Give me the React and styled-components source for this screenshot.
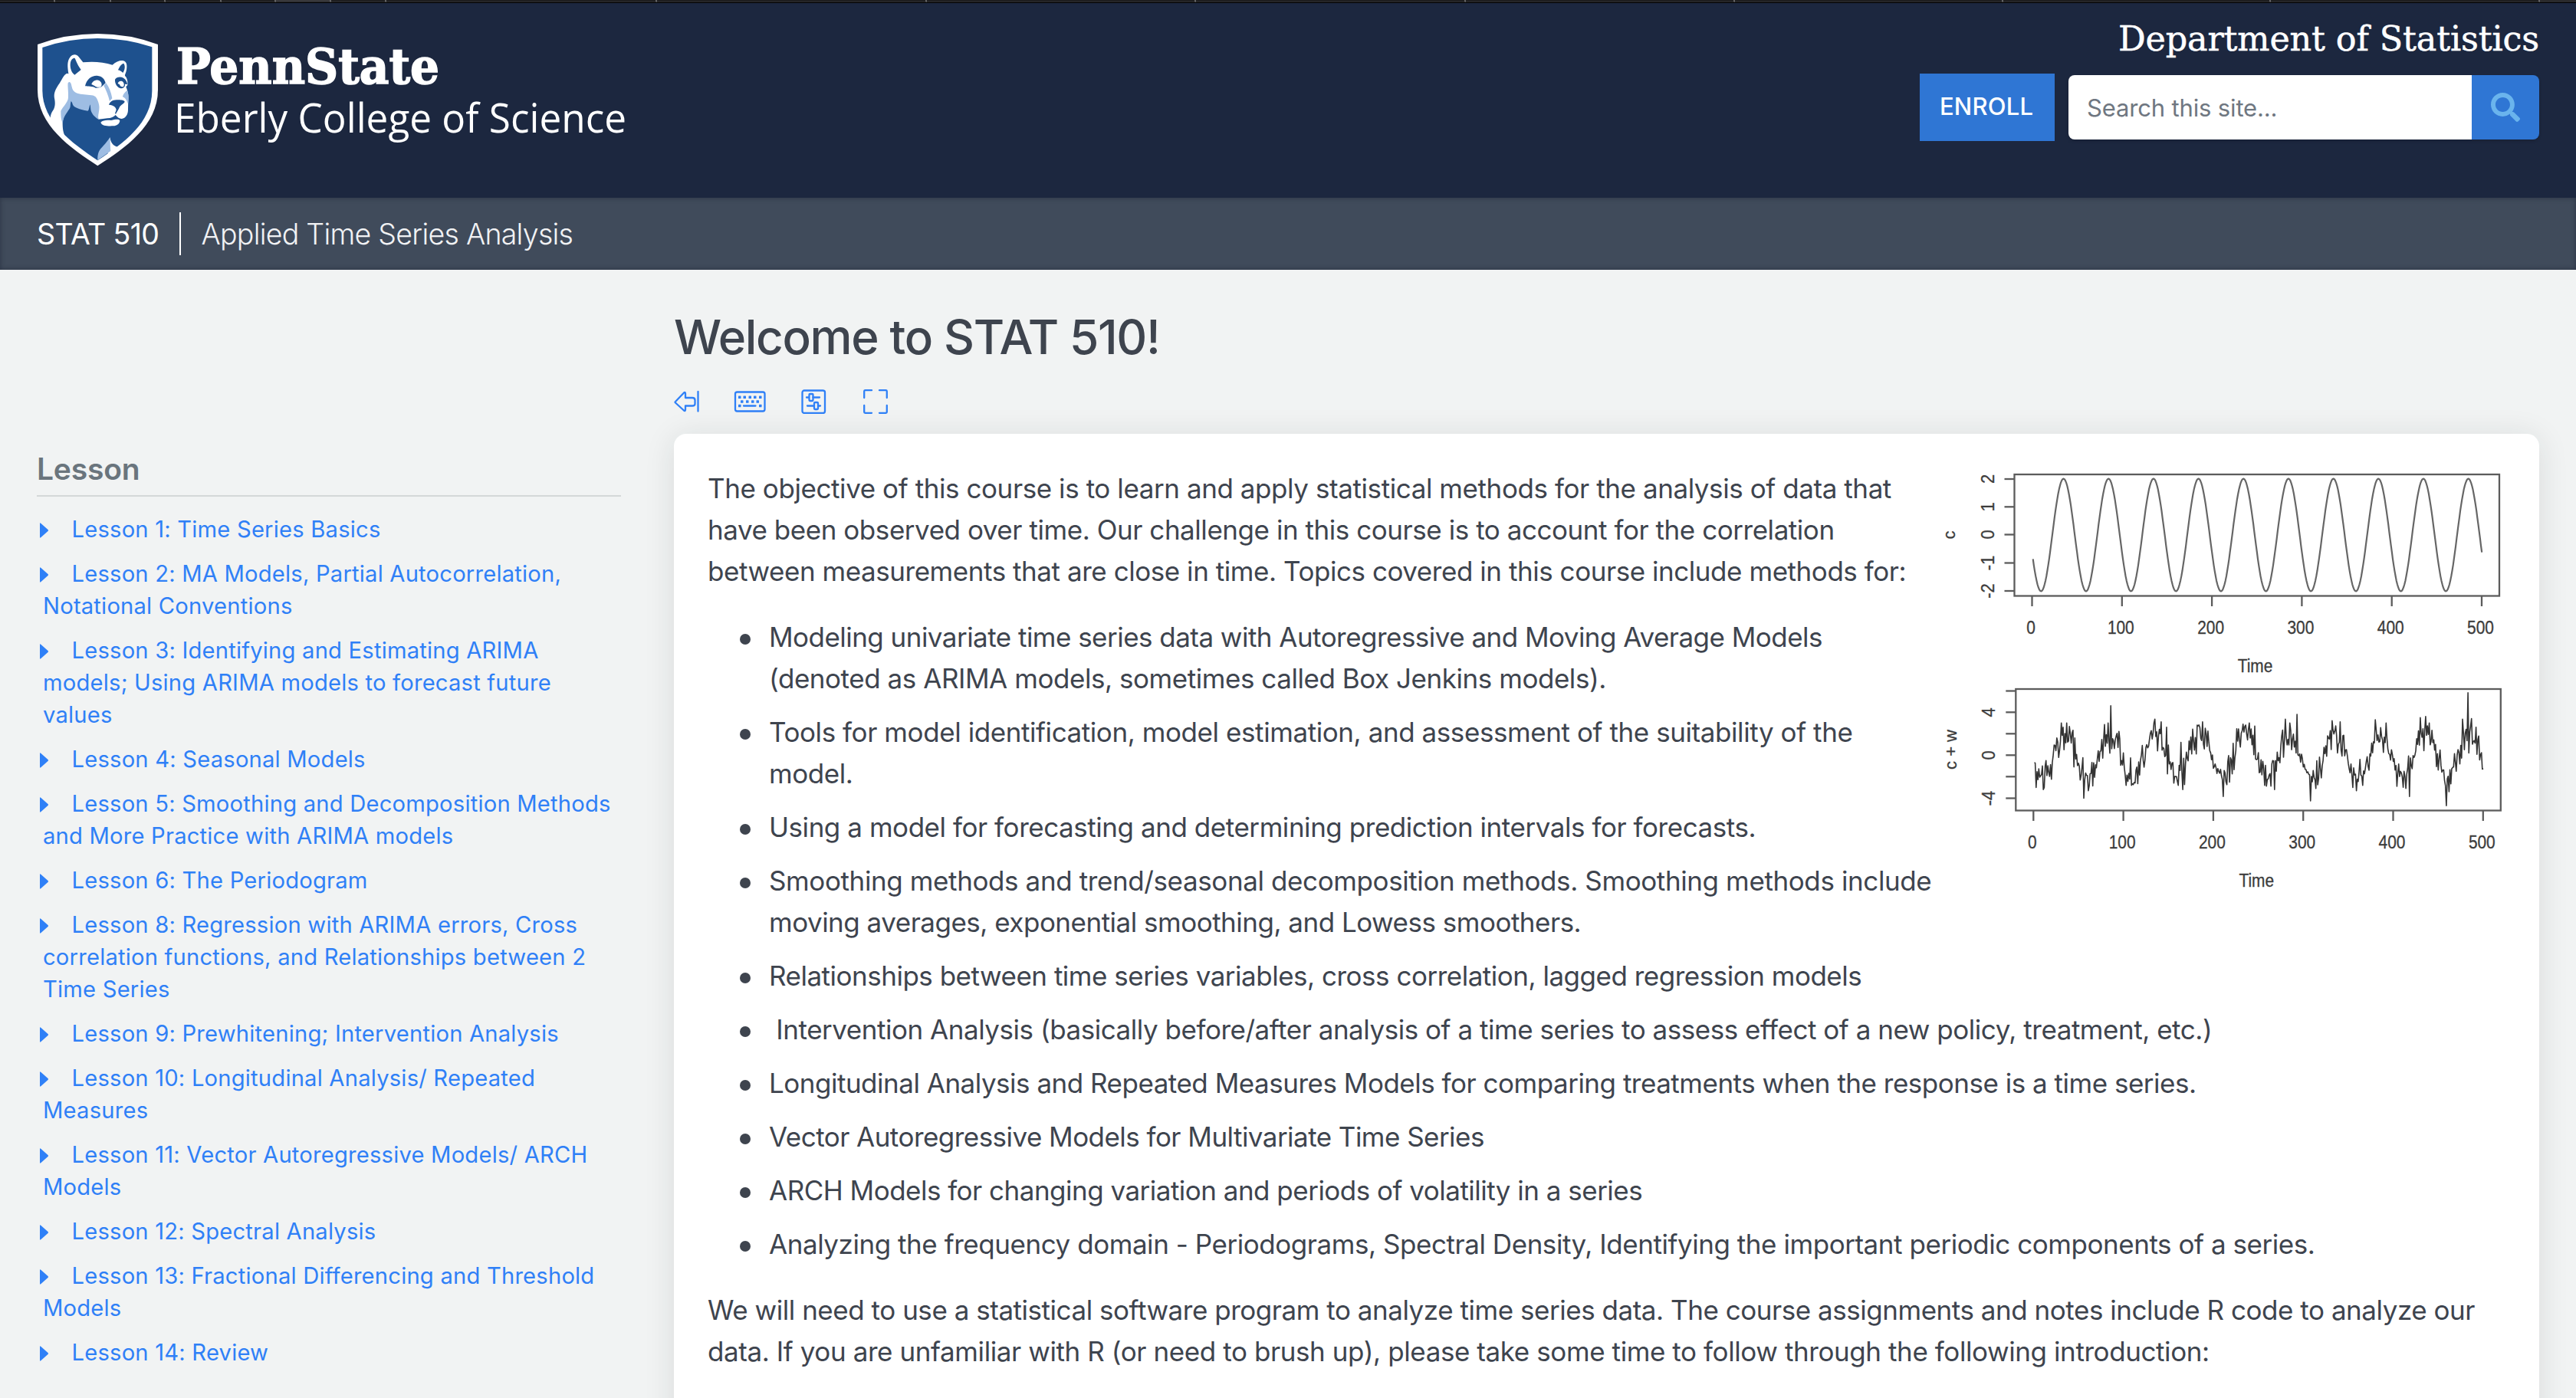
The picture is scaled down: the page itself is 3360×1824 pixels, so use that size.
import React from "react";
import styled, { createGlobalStyle } from "styled-components";
import { FaSearch } from "react-icons/fa";

const sans = `Inter, "Open Sans", "Liberation Sans", sans-serif`;
const slab = `"DejaVu Serif", "Liberation Serif", serif`;

const GlobalStyle = createGlobalStyle`
  * { box-sizing: border-box; }
  html, body { margin: 0; padding: 0; background: #f1f3f3; }
  body { font-family: ${sans}; color: #3e444e; }
`;

const Page = styled.div`
  display: flex;
  flex-direction: column;
  height: 1824px;
  overflow: hidden;
`;

/* ---- browser tab edge ---- */
const TabStrip = styled.div`
  display: flex;
  flex: none;
  height: 4px;
  background: #1e1e20;
  border-bottom: 1px solid #000;
`;
const Tab = styled.div`
  width: ${(p) => p.$w}px;
  background: ${(p) => (p.$active ? "#38383b" : "#1e1e20")};
  border-right: 2px solid #626264;
  border-bottom: 1px solid #2c2c2e;
`;
const TabRest = styled.div`
  flex: 1;
  background: #2a2a2c;
`;

/* ---- header ---- */
const Header = styled.header`
  display: flex;
  flex: none;
  justify-content: space-between;
  height: 254px;
  padding: 0 48px;
  background: #1c273f;
`;
const Logo = styled.svg`
  display: block;
  width: 800px;
  height: 254px;
`;
const HeaderSide = styled.div`
  display: flex;
  flex-direction: column;
  align-items: flex-end;
  padding-top: 23px;
`;
const Department = styled.div`
  font: 400 44.5px/48px ${slab};
  letter-spacing: -0.15px;
  color: #fff;
  white-space: nowrap;
  -webkit-text-stroke: 0.5px #fff;
`;
const Actions = styled.div`
  display: flex;
  align-items: center;
  gap: 18px;
  margin-top: 21px;
`;
const Enroll = styled.a`
  display: flex;
  align-items: center;
  justify-content: center;
  width: 176px;
  height: 88px;
  padding: 0 2px 3px 0;
  background: #2f76d4;
  color: #fff;
  font-size: 31px;
  font-weight: 500;
  letter-spacing: 0.2px;
`;
const SearchForm = styled.div`
  display: flex;
  width: 614px;
  height: 84px;
  border-radius: 8px;
  overflow: hidden;
  box-shadow: 0 2px 4px rgba(0, 0, 0, 0.15);
`;
const SearchField = styled.div`
  display: flex;
  flex: 1;
  align-items: center;
  padding-left: 24px;
  background: #fff;
  color: #6f7781;
  font-size: 31px;
  letter-spacing: -0.15px;
`;
const SearchButton = styled.div`
  display: flex;
  align-items: center;
  justify-content: center;
  width: 88px;
  background: #2f76d4;
  color: #6ab4ed;
`;

/* ---- course bar ---- */
const CourseBar = styled.div`
  display: flex;
  flex: none;
  align-items: center;
  height: 94px;
  padding: 0 48px;
  background: #404b5b;
  box-shadow: inset 0 0 6px rgba(20, 28, 44, 0.5);
  color: #fff;
  font-size: 37.5px;
  white-space: nowrap;
`;
const CourseCode = styled.span`
  padding-right: 27px;
  letter-spacing: -0.6px;
`;
const Divider = styled.span`
  width: 2px;
  height: 56px;
  background: #fff;
`;
const CourseName = styled.span`
  padding-left: 26px;
  font-weight: 300;
  letter-spacing: -0.73px;
  color: #f1f2f4;
`;

/* ---- body ---- */
const Body = styled.div`
  display: grid;
  grid-template-columns: 762px 1fr;
  column-gap: 69px;
  flex: 1;
  padding: 0 48px;
`;
const Sidebar = styled.nav`
  padding-top: 230px;
`;
const SidebarTitle = styled.h2`
  margin: 0;
  height: 66px;
  border-bottom: 2px solid #d4d8d8;
  color: #6a757d;
  font-size: 39px;
  font-weight: 600;
  line-height: 60px;
  letter-spacing: -0.2px;
`;
const LessonList = styled.ul`
  display: flex;
  flex-direction: column;
  gap: 16px;
  margin: 0;
  padding: 22px 0 0;
  list-style: none;
`;
const Lesson = styled.li`
  padding-left: 8px;
  color: #2f80f7;
  font-size: 29.2px;
  line-height: 42px;
  letter-spacing: 0.2px;
  white-space: nowrap;
`;
const Caret = styled.svg`
  width: 12px;
  height: 20px;
  margin: 0 29.5px 0 -4px;
  vertical-align: -1px;
  fill: currentColor;
`;
const Main = styled.main`
  display: flex;
  flex-direction: column;
`;
const Title = styled.h1`
  margin: 48px 0 0;
  font-size: 62px;
  font-weight: 500;
  line-height: 80px;
  letter-spacing: -1.35px;
`;
const Tools = styled.div`
  display: flex;
  align-items: center;
  height: 32px;
  margin-top: 28px;
  color: #2f80f7;
`;
const ToolIcon = styled.svg`
  width: ${(p) => p.$w}px;
  height: 32px;
  margin-right: ${(p) => p.$gap || 0}px;
  fill: none;
  stroke: currentColor;
  stroke-width: 2.3;
  stroke-linejoin: round;
  stroke-linecap: round;
`;
const Card = styled.article`
  flex: none;
  height: 1400px;
  margin-top: 26px;
  padding: 44px;
  background: #fff;
  border-radius: 16px;
  box-shadow: 0 4px 40px rgba(30, 40, 40, 0.11);
  font-size: 35px;
  line-height: 54px;
  letter-spacing: -0.45px;
  white-space: nowrap;
`;
const Figure = styled.svg`
  float: right;
  display: block;
  width: 738px;
  height: 570px;
`;
const Line = styled.span`
  letter-spacing: ${(p) => p.$track}px;
`;
const Paragraph = styled.p`
  margin: 0;
`;
const Topics = styled.ul`
  margin: 32px 0;
  padding: 0 0 0 80px;
  list-style: none;
`;
const Topic = styled.li`
  & + & { margin-top: 16px; }
  &::before {
    content: "";
    display: inline-block;
    width: 14px;
    height: 14px;
    margin: 0 24px 0 -38px;
    border-radius: 50%;
    background: #3e444e;
    vertical-align: 3px;
  }
`;

const tabWidths = [72, 73, 71, 73, 71, 72, 72, 353, 352, 351, 352, 351, 350, 349, 351];

const lessons = [
  ["Lesson 1: Time Series Basics"],
  ["Lesson 2: MA Models, Partial Autocorrelation,", "Notational Conventions"],
  ["Lesson 3: Identifying and Estimating ARIMA", "models; Using ARIMA models to forecast future", "values"],
  ["Lesson 4: Seasonal Models"],
  ["Lesson 5: Smoothing and Decomposition Methods", "and More Practice with ARIMA models"],
  ["Lesson 6: The Periodogram"],
  ["Lesson 8: Regression with ARIMA errors, Cross", "correlation functions, and Relationships between 2", "Time Series"],
  ["Lesson 9: Prewhitening; Intervention Analysis"],
  ["Lesson 10: Longitudinal Analysis/ Repeated", "Measures"],
  ["Lesson 11: Vector Autoregressive Models/ ARCH", "Models"],
  ["Lesson 12: Spectral Analysis"],
  ["Lesson 13: Fractional Differencing and Threshold", "Models"],
  ["Lesson 14: Review"],
];

/* A line is its text, or its text with its own tracking. */
const topics = [
  [["Modeling univariate time series data with Autoregressive and Moving Average Models", -0.53], "(denoted as ARIMA models, sometimes called Box Jenkins models)."],
  [["Tools for model identification, model estimation, and assessment of the suitability of the", -0.42], "model."],
  ["Using a model for forecasting and determining prediction intervals for forecasts."],
  [["Smoothing methods and trend/seasonal decomposition methods. Smoothing methods include", -0.39], ["moving averages, exponential smoothing, and Lowess smoothers.", -0.5]],
  [["Relationships between time series variables, cross correlation, lagged regression models", -0.49]],
  [["\u00a0Intervention Analysis (basically before/after analysis of a time series to assess effect of a new policy, treatment, etc.)", -0.47]],
  [["Longitudinal Analysis and Repeated Measures Models for comparing treatments when the response is a time series.", -0.49]],
  [["Vector Autoregressive Models for Multivariate Time Series", -0.54]],
  [["ARCH Models for changing variation and periods of volatility in a series", -0.51]],
  ["Analyzing the frequency domain - Periodograms, Spectral Density, Identifying the important periodic components of a series."],
];

const Lines = ({ lines }) =>
  lines.map((line, i) => (
    <React.Fragment key={i}>
      {i > 0 && <br />}
      {Array.isArray(line) ? <Line $track={line[1]}>{line[0]}</Line> : line}
    </React.Fragment>
  ));

/* ---- time series plots ---- */
const wave = (t) => 2 * Math.cos((2 * Math.PI * t) / 50 + 0.6 * Math.PI);

const peaks = {
  1: -0.7, 3: -3, 11: -3.2, 33: 2.6, 56: -4, 61: -3.3, 86: 4.6, 87: 0.6, 103: -2.8, 109: -2.8, 135: 3.35,
  142: 3.1, 148: 2.6, 156: -2.6, 161: -2.8, 166: -3.2, 164: 1.2, 182: 2.8, 188: 3.1, 211: -3.85, 218: -2.5,
  236: 2.8, 246: 2.7, 257: -2.8, 268: -3.2, 280: 3.35, 293: 3.8, 292: 0.2, 308: -4.25, 314: -3.1, 332: 3.2,
  341: 3.1, 355: -3, 359: -3.3, 373: -1.4, 380: 3.3, 392: 3, 404: -2.9, 414: -3.1, 418: -3.85, 430: 3.5,
  436: 3.6, 459: -4.7, 462: -3.4, 470: -1.5, 477: 3.35, 483: 5.8, 484: 0.2, 487: 3.4, 492: 2.6, 499: -1.3,
};

const noisy = (() => {
  let seed = 20177;
  const rand = () => {
    seed = (seed * 1103515245 + 12345) % 2147483648;
    return seed / 2147483648;
  };
  const values = {};
  for (let t = 1; t <= 500; t++) {
    const n = (rand() + rand() + rand() - 1.5) * 1.45;
    values[t] = t in peaks ? peaks[t] : Math.max(-3, Math.min(3, wave(t) * 0.95 + n));
  }
  return (t) => values[t];
})();

const linePath = (fn, x0, y0, unit) => {
  let d = "";
  for (let t = 1; t <= 500; t++) {
    d += `${t === 1 ? "M" : "L"}${(x0 + t * 1.1734).toFixed(1)} ${(y0 - fn(t) * unit).toFixed(1)}`;
  }
  return d;
};

const PlotText = styled.text`
  font: 22px "Liberation Sans", Arial, sans-serif;
  letter-spacing: 0;
  fill: #3c3c3c;
  stroke: #3c3c3c;
  stroke-width: 0.3;
  text-anchor: middle;
`;

const Plot = ({ x, y, fn, unit, zero, ticks, label, stroke, strokeWidth }) => (
  <g transform={`translate(${x} ${y})`}>
    <g fill="none" stroke="#5c5c5c" strokeWidth="2.300">
      <rect x="0" y="0" width="632.5" height="158.5" />
      {ticks.map(([ty]) => <path key={ty} d={`M-13 ${ty}H0`} />)}
      {[0, 1, 2, 3, 4, 5].map((i) => <path key={i} d={`M${23 + i * 117.3} 159V172`} />)}
    </g>
    <path d={linePath(fn, 23, zero, unit)} fill="none" stroke={stroke} strokeWidth={strokeWidth} strokeLinejoin="round" />
    {ticks.map(([ty, name]) =>
      name ? (
        <PlotText key={ty} transform={`translate(-27 ${ty}) rotate(-90) scale(1 1.08)`}>{name}</PlotText>
      ) : null
    )}
    {[0, 1, 2, 3, 4, 5].map((i) => (
      <PlotText key={i} transform={`translate(${21.5 + i * 117.3} 207.5) scale(0.95 1.06)`}>{i * 100}</PlotText>
    ))}
    <PlotText transform="translate(314 258) scale(0.95 1.08)">Time</PlotText>
    <PlotText transform={`translate(-77.5 ${79}) rotate(-90)`}>{label}</PlotText>
  </g>
);

const Plots = () => (
  <Figure viewBox="2530 610 738 570">
    <Plot
      x={2627.5} y={619} fn={wave} unit={36.7} zero={79} stroke="#666" strokeWidth="2.2" label="c"
      ticks={[[6, "2"], [42.3, "1"], [78.5, "0"], [115.5, "-1"], [152, "-2"]]}
    />
    <Plot
      x={2629.3} y={899} fn={noisy} unit={14.03} zero={86.3} stroke="rgba(0,0,0,0.8)" strokeWidth="1.6" label="c + w"
      ticks={[[2.5, ""], [30.3, "4"], [58.3, ""], [86.3, "0"], [114.3, ""], [142.5, "-4"]]}
    />
  </Figure>
);

const BrandName = styled.text`
  font: 700 63.5px ${slab};
  fill: #fff;
  stroke: #fff;
  stroke-width: 1.6;
`;
const CollegeName = styled.text`
  font: 400 53.5px "Open Sans", "Noto Sans", sans-serif;
  fill: #fff;
`;

const navy = "#1e518e";
const sky = "#9ebde3";

const PennStateLogo = () => (
  <Logo viewBox="48 4 800 254">
    <g transform="translate(30 30) scale(0.33333)">
      <path fill="#fff" d="M57 84Q170 42 292 42Q415 42 528 84V262C528 400 400 490 292 559C185 490 57 400 57 262Z" />
      <path fill={navy} d="M76 96Q180 60 292 60Q405 60 505 94V265C505 390 395 470 292 538C190 470 76 385 76 265Z" />
      <path fill="#fff" d="M172 197C158 202 152 224 138 243C122 268 120 280 124 300C128 326 121 337 115 346C110 354 108 362 107 370L104 384L130 420L166 446C154 425 155 400 155 385L180 300L190 240L184 200Z" />
      <path fill="#fff" d="M178 198C174 170 172 150 184 134C195 120 210 122 217 131L235 154C270 150 315 152 350 164C362 152 378 146 390 147C407 150 408 166 405 184C403 196 398 202 399 207C408 215 410 228 409 243L403 250C408 262 414 280 412 295L411 340C411 358 402 373 386 375C376 374 368 368 362 360C355 368 345 372 330 373L295 377L285 300L200 290L176 240Z" />
      <path fill={sky} d="M180 231C187 231 189 239 191 250C194 268 208 276 225 278L268 283C284 285 287 292 291 300C297 315 300 325 298 340C296 355 293 364 295 377C280 368 266 352 265 338L263 319C259 325 259 343 253 344C235 342 205 333 198 325C192 318 194 310 188 306C184 318 187 326 183 334C170 355 156 370 156 392C148 380 148 360 148 344C158 324 177 310 177 290C178 270 174 245 176 235Z" />
      <path fill={navy} d="M202 137C207 142 209 158 227 183L202 203C186 192 183 168 186 154C189 142 196 137 202 137Z" />
      <path fill={navy} d="M394 158C401 168 399 182 391 195C386 190 380 186 371 184C375 182 378 163 394 158Z" />
      <path fill={navy} d="M243 247C249 220 268 205 290 206C310 208 320 220 323 235L308 249C300 252 292 255 284 254C270 247 255 249 243 247Z" />
      <path fill="#fff" d="M268 240C272 228 284 221 297 225C306 229 311 240 306 248C298 254 286 252 280 246Z" />
      <path fill={navy} d="M360 221C366 211 382 209 393 215C403 221 408 232 408 240L399 239C400 250 394 255 382 256C370 252 359 240 360 221Z" />
      <path fill="#fff" d="M371 237C372 229 380 225 388 228C396 233 397 243 393 249C386 252 380 248 378 241Z" />
      <path fill={sky} d="M316 245L325 235C337 252 345 270 349 295L339 306C334 284 325 262 316 245Z" />
      <path fill={sky} d="M408 263C413 275 415 300 411 316C405 300 398 292 390 289C390 282 397 272 408 263Z" />
      <path fill={navy} d="M336 320C340 308 350 302 366 301C382 300 396 302 398 308C394 318 380 320 376 334L363 356L360 354L365 340C364 330 355 321 336 320Z" />
      <path fill="#fff" d="M304 389C312 380 328 379 345 381C362 377 378 375 379 383C377 396 366 402 354 403C335 404 308 404 304 389Z" />
      <path fill="#fff" d="M340 447C344 470 352 480 370 485L376 490L335 522L330 500Z" />
      <path fill={sky} d="M340 448C342 470 341 485 343 501L292 537C291 515 296 502 304 492C315 480 330 465 340 448Z" />
    </g>
    <BrandName x="230" y="109" textLength="343" lengthAdjust="spacingAndGlyphs">PennState</BrandName>
    <CollegeName x="227" y="173" textLength="590" lengthAdjust="spacingAndGlyphs">Eberly College of Science</CollegeName>
  </Logo>
);

const ToolBar = () => (
  <Tools>
    <ToolIcon $w={33} $gap={45} viewBox="0 0 33 32">
      <path d="M2 16L13 4.500Q15 3 15 5.500V11H24Q27.500 11 27.500 14V19Q27.500 21.500 24 21.500H15V26.500Q15 29 13 27.500L2 17.500Q1 16.500 2 16ZM31.500 3V28.500" />
    </ToolIcon>
    <ToolIcon $w={42} $gap={46} viewBox="0 0 42 32">
      <rect x="2" y="3.500" width="38.500" height="25" rx="2.500" />
      <path d="M13 21.500H28.500" />
      <g fill="currentColor" stroke="none">
        {[6, 12.5, 19.5, 26, 33].map((x) => <rect key={x} x={x} y="8.500" width="3.500" height="3.500" rx="0.500" />)}
        {[9, 16, 23, 29.5].map((x) => <rect key={x} x={x} y="14.200" width="3.500" height="3.500" rx="0.500" />)}
        {[6, 33].map((x) => <rect key={x} x={x} y="19.800" width="3.500" height="3.500" rx="0.500" />)}
      </g>
    </ToolIcon>
    <ToolIcon $w={33} $gap={48} viewBox="0 0 33 32">
      <rect x="1.500" y="1.500" width="29.500" height="29.500" rx="2.500" />
      <path d="M7 10.500H9.500M15.500 10.500H24M8 21.500H16M22.500 21.500H25" />
      <rect x="10.500" y="6" width="5" height="9" rx="1" />
      <rect x="17" y="17" width="5" height="9" rx="1" />
    </ToolIcon>
    <ToolIcon $w={32} viewBox="0 0 32 32">
      <path d="M1.200 11V2.500Q1.200 1.200 2.500 1.200H11M21 1.200H29.500Q30.800 1.200 30.800 2.500V11M30.800 21V29.500Q30.800 30.800 29.500 30.800H21M11 30.800H2.500Q1.200 30.800 1.200 29.500V21" />
    </ToolIcon>
  </Tools>
);

export default function App() {
  return (
    <Page>
      <GlobalStyle />
      <TabStrip>
        {tabWidths.map((w, i) => <Tab key={i} $w={w} $active={i === 5} />)}
        <TabRest />
      </TabStrip>
      <Header>
        <PennStateLogo />
        <HeaderSide>
          <Department>Department of Statistics</Department>
          <Actions>
            <Enroll>ENROLL</Enroll>
            <SearchForm>
              <SearchField>Search this site...</SearchField>
              <SearchButton><FaSearch size={38} /></SearchButton>
            </SearchForm>
          </Actions>
        </HeaderSide>
      </Header>
      <CourseBar>
        <CourseCode>STAT 510</CourseCode>
        <Divider />
        <CourseName>Applied Time Series Analysis</CourseName>
      </CourseBar>
      <Body>
        <Sidebar>
          <SidebarTitle>Lesson</SidebarTitle>
          <LessonList>
            {lessons.map((lines) => (
              <Lesson key={lines[0]}>
                <Caret viewBox="0 0 12 20"><path d="M0 1.500Q0 -0.500 1.500 1L10.500 9Q11.500 10 10.500 11L1.500 19Q0 20.500 0 18.500Z" /></Caret>
                <Lines lines={lines} />
              </Lesson>
            ))}
          </LessonList>
        </Sidebar>
        <Main>
          <Title>Welcome to STAT 510!</Title>
          <ToolBar />
          <Card>
            <Plots />
            <Paragraph>
              <Lines
                lines={[
                  ["The objective of this course is to learn and apply statistical methods for the analysis of data that", -0.42],
                  "have been observed over time. Our challenge in this course is to account for the correlation",
                  "between measurements that are close in time. Topics covered in this course include methods for:",
                ]}
              />
            </Paragraph>
            <Topics>
              {topics.map((lines, i) => (
                <Topic key={i}><Lines lines={lines} /></Topic>
              ))}
            </Topics>
            <Paragraph>
              <Lines
                lines={[
                  ["We will need to use a statistical software program to analyze time series data. The course assignments and notes include R code to analyze our", -0.465],
                  ["data. If you are unfamiliar with R (or need to brush up), please take some time to follow through the following introduction:", -0.41],
                ]}
              />
            </Paragraph>
          </Card>
        </Main>
      </Body>
    </Page>
  );
}
